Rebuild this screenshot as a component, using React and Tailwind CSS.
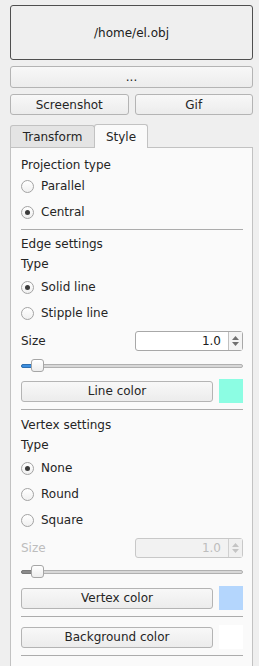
import React from 'react';

const Radio = ({ label, checked, disabled }) => (
  <div className="flex items-center h-[26px]">
    <span className="w-[13px] h-[13px] rounded-full border border-[#a3a3a3] bg-gradient-to-b from-[#ffffff] to-[#f0f0f0] flex items-center justify-center">
      {checked && <span className="w-[5px] h-[5px] rounded-full bg-[#3b3b3b]"></span>}
    </span>
    <span className={`ml-[7px] ${disabled ? 'text-[#b5b5b5]' : 'text-[#252525]'}`}>{label}</span>
  </div>
);

const Button = ({ children, className = '' }) => (
  <button className={`h-[21px] rounded-[3px] border border-[#b4b4b4] bg-gradient-to-b from-[#f8f8f8] to-[#ececec] text-[#252525] leading-none ${className}`}>
    {children}
  </button>
);

const SpinBox = ({ disabled }) => (
  <div className={`w-[108px] h-[20px] rounded-[3px] border flex ${disabled ? 'border-[#c8c8c8] bg-[#f2f2f2]' : 'border-[#a8a8a8] bg-white'}`}>
    <div className={`flex-1 flex items-center justify-end pr-[7px] ${disabled ? 'text-[#bdbdbd]' : 'text-[#202020]'}`}>1.0</div>
    <div className={`w-[14px] border-l flex flex-col items-center justify-center gap-[2px] ${disabled ? 'border-[#d0d0d0] bg-[#f0f0f0]' : 'border-[#c0c0c0] bg-[#f4f4f4]'}`}>
      <svg width="7" height="4" viewBox="0 0 7 4"><path d="M0 4 L3.5 0 L7 4 Z" fill={disabled ? '#c4c4c4' : '#707070'} /></svg>
      <svg width="7" height="4" viewBox="0 0 7 4"><path d="M0 0 L3.5 4 L7 0 Z" fill={disabled ? '#c4c4c4' : '#707070'} /></svg>
    </div>
  </div>
);

const Slider = ({ disabled }) => (
  <div className="relative h-[16px] flex items-center">
    <div className="w-full h-[4px] rounded-full border border-[#b0b0b0] bg-[#d8d8d8]"></div>
    <div className={`absolute left-0 w-[14px] h-[4px] rounded-l-full border ${disabled ? 'bg-[#8a8a8a] border-[#7a7a7a]' : 'bg-[#3d8fe0] border-[#2f6fb0]'}`}></div>
    <div className="absolute left-[10px] top-[1px] w-[13px] h-[13px] rounded-[3px] border border-[#a6a6a6] bg-gradient-to-b from-[#ffffff] to-[#eeeeee]"></div>
  </div>
);

const Separator = ({ className = '' }) => <div className={`h-px bg-[#acacac] ${className}`}></div>;

const Label = ({ children, className = '' }) => (
  <div className={`h-[20px] flex items-center text-[#252525] ${className}`}>{children}</div>
);

export default function App() {
  return (
    <div className="w-[259px] h-[666px] overflow-hidden bg-[#efefef] pt-[5px] pl-[10px] pr-[6px] text-[12px]" style={{ fontFamily: '"DejaVu Sans", sans-serif' }}>
      <button className="w-full h-[55px] rounded-[3px] border border-[#4f4f4f] bg-[#efefef] text-[#202020]">/home/el.obj</button>
      <Button className="w-full mt-[6px] h-[22px]">...</Button>
      <div className="flex gap-[6px] mt-[6px]">
        <Button className="flex-1">Screenshot</Button>
        <Button className="flex-1">Gif</Button>
      </div>

      <div className="flex items-end mt-[8px] h-[24px] relative z-10">
        <div className="w-[85px] h-[22px] rounded-t-[3px] border border-b-0 border-[#c2c2c2] bg-[#e4e4e4] flex items-center justify-center text-[#252525]">Transform</div>
        <div className="w-[54px] h-[24px] -ml-px rounded-t-[3px] border border-b-0 border-[#c2c2c2] bg-[#fafafa] flex items-center justify-center text-[#252525] -mb-px">Style</div>
      </div>

      <div className="w-[243px] h-[600px] border border-[#c2c2c2] bg-[#fafafa] pl-[10px] pr-[9px] pt-[8px]">
        <div className="h-[17px] flex items-center text-[#252525]">Projection type</div>
        <Radio label="Parallel" />
        <Radio label="Central" checked />
        <Separator className="mt-[4px]" />

        <Label className="mt-[4px]">Edge settings</Label>
        <Label>Type</Label>
        <Radio label="Solid line" checked />
        <Radio label="Stipple line" />
        <div className="mt-[4px] h-[21px] flex items-center justify-between">
          <span className="text-[#252525]">Size</span>
          <SpinBox />
        </div>
        <div className="mt-[7px]"><Slider /></div>
        <div className="mt-[5px] h-[24px] flex items-center justify-between">
          <Button className="w-[192px]">Line color</Button>
          <div className="w-[24px] h-[24px] bg-[#8cfde3]"></div>
        </div>
        <Separator className="mt-[6px]" />

        <Label className="mt-[5px]">Vertex settings</Label>
        <Label>Type</Label>
        <Radio label="None" checked />
        <Radio label="Round" />
        <Radio label="Square" />
        <div className="mt-[4px] h-[21px] flex items-center justify-between">
          <span className="text-[#bdbdbd]">Size</span>
          <SpinBox disabled />
        </div>
        <div className="mt-[6px]"><Slider disabled /></div>
        <div className="mt-[6px] h-[24px] flex items-center justify-between">
          <Button className="w-[192px]">Vertex color</Button>
          <div className="w-[24px] h-[24px] bg-[#b4d6fd]"></div>
        </div>
        <Separator className="mt-[6px]" />
        <div className="mt-[8px] h-[24px] flex items-center justify-between">
          <Button className="w-[192px]">Background color</Button>
          <div className="w-[24px] h-[24px] bg-white"></div>
        </div>
        <Separator className="mt-[6px]" />
      </div>
    </div>
  );
}
